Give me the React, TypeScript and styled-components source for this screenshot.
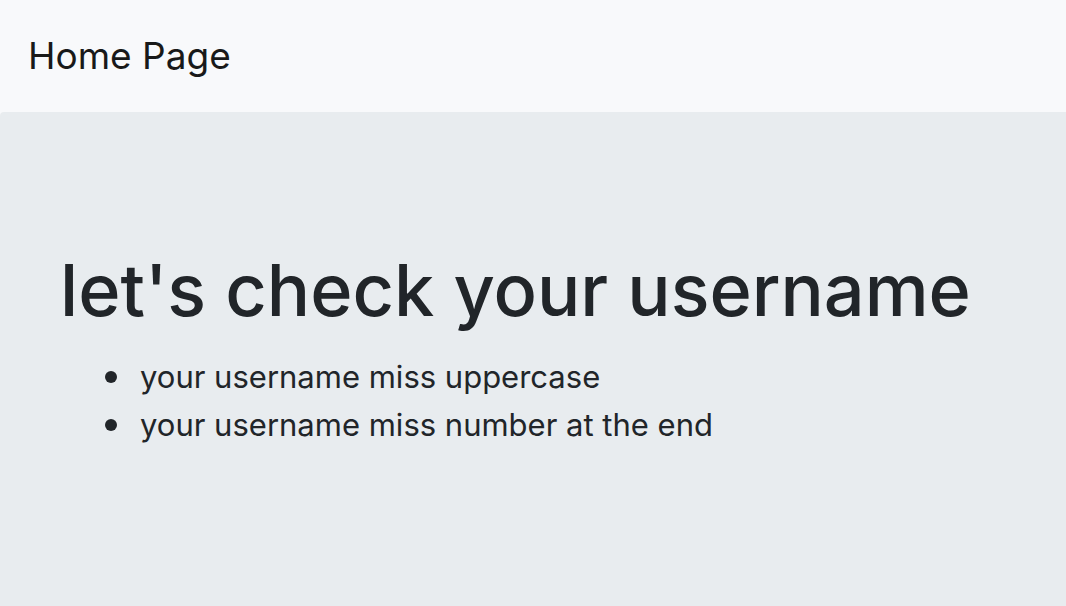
import React from "react";
import styled, { createGlobalStyle } from "styled-components";

const GlobalStyle = createGlobalStyle`
  *, *::before, *::after { box-sizing: border-box; }
  body {
    margin: 0;
    background: #f8f9fb;
    color: #212529;
    font-family: Inter, "Liberation Sans", sans-serif;
    font-size: 31px;
    line-height: 48px;
  }
`;

const Page = styled.div`
  display: flex;
  flex-direction: column;
  min-height: 100vh;
`;

const Navbar = styled.nav`
  display: flex;
  align-items: center;
  padding: 26px 28px;
  background: #f8f9fb;
`;

const Brand = styled.a`
  color: #191919;
  font-size: 37px;
  line-height: 60px;
  text-decoration: none;
`;

const Jumbotron = styled.main`
  flex: 1;
  padding: 130px 60px;
  background: #e8ecef;
  border-radius: 4px 0 0 0;
`;

const Title = styled.h1`
  margin: 0 0 15px;
  font-size: 72px;
  font-weight: 500;
  line-height: 96px;
`;

const Messages = styled.ul`
  margin: 0;
  padding-left: 45px;
  list-style: none;
`;

const Message = styled.li`
  display: flex;
  align-items: center;
  gap: 23px;

  &::before {
    content: "";
    flex: none;
    width: 12px;
    height: 12px;
    border-radius: 50%;
    background: currentColor;
  }
`;

const messages = [
  "your username miss uppercase",
  "your username miss number at the end",
];

export default function App() {
  return (
    <>
      <GlobalStyle />
      <Page>
        <Navbar>
          <Brand href="#">Home Page</Brand>
        </Navbar>
        <Jumbotron>
          <Title>let's check your username</Title>
          <Messages>
            {messages.map((message) => (
              <Message key={message}>{message}</Message>
            ))}
          </Messages>
        </Jumbotron>
      </Page>
    </>
  );
}
